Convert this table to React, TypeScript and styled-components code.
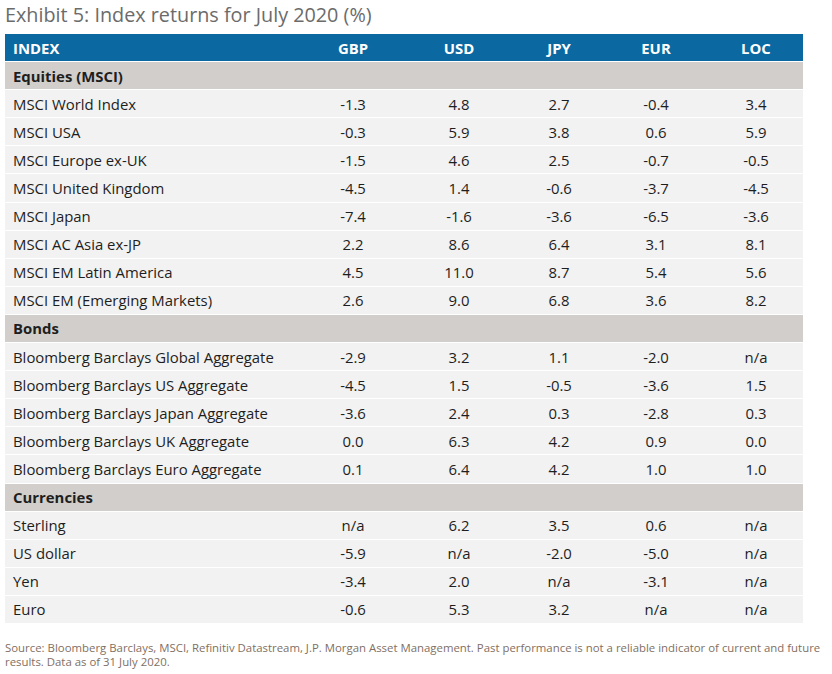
import { createGlobalStyle } from 'styled-components'
import styled from 'styled-components'

const GlobalStyle = createGlobalStyle`
  html, body {
    margin: 0;
    padding: 0;
    background: #ffffff;
  }
  body {
    font-family: "Open Sans", "Liberation Sans", sans-serif;
  }
`;

const Page = styled.div`
  width: 832px;
  height: 674px;
  padding: 0 0 0 5px;
  box-sizing: border-box;
  overflow: hidden;
`;

const Title = styled.h1`
  margin: 0;
  height: 34px;
  font-size: 19.8px;
  font-weight: 400;
  line-height: 30px;
  color: #6b6b6b;
`;

const Table = styled.div`
  width: 798px;
  display: flex;
  flex-direction: column;
  gap: 1px;
  background: #ffffff;
`;

const Row = styled.div<{ $kind: 'head' | 'section' | 'data' }>`
  display: grid;
  grid-template-columns: 298px 100px 112px 88px 106px 94px;
  height: 27.1px;
  align-items: center;
  font-size: 14.9px;
  background: ${p =>
    p.$kind === 'head' ? '#0b68a1' : p.$kind === 'section' ? '#d1cecb' : '#f2f2f2'};
  color: ${p => (p.$kind === 'head' ? '#ffffff' : '#1e1e1e')};
  font-weight: ${p => (p.$kind === 'data' ? 400 : 700)};
`;

const Label = styled.div`
  padding-left: 8px;
  white-space: nowrap;
`;

const Cell = styled.div`
  text-align: center;
`;

const Note = styled.p`
  margin: 18px 0 0;
  font-size: 11.4px;
  line-height: 14px;
  color: #7f6f63;
  white-space: nowrap;
`;

type Section = { name: string; rows: [string, string[]][] }

const sections: Section[] = [
  {
    name: 'Equities (MSCI)',
    rows: [
      ['MSCI World Index', ['-1.3', '4.8', '2.7', '-0.4', '3.4']],
      ['MSCI USA', ['-0.3', '5.9', '3.8', '0.6', '5.9']],
      ['MSCI Europe ex-UK', ['-1.5', '4.6', '2.5', '-0.7', '-0.5']],
      ['MSCI United Kingdom', ['-4.5', '1.4', '-0.6', '-3.7', '-4.5']],
      ['MSCI Japan', ['-7.4', '-1.6', '-3.6', '-6.5', '-3.6']],
      ['MSCI AC Asia ex-JP', ['2.2', '8.6', '6.4', '3.1', '8.1']],
      ['MSCI EM Latin America', ['4.5', '11.0', '8.7', '5.4', '5.6']],
      ['MSCI EM (Emerging Markets)', ['2.6', '9.0', '6.8', '3.6', '8.2']],
    ],
  },
  {
    name: 'Bonds',
    rows: [
      ['Bloomberg Barclays Global Aggregate', ['-2.9', '3.2', '1.1', '-2.0', 'n/a']],
      ['Bloomberg Barclays US Aggregate', ['-4.5', '1.5', '-0.5', '-3.6', '1.5']],
      ['Bloomberg Barclays Japan Aggregate', ['-3.6', '2.4', '0.3', '-2.8', '0.3']],
      ['Bloomberg Barclays UK Aggregate', ['0.0', '6.3', '4.2', '0.9', '0.0']],
      ['Bloomberg Barclays Euro Aggregate', ['0.1', '6.4', '4.2', '1.0', '1.0']],
    ],
  },
  {
    name: 'Currencies',
    rows: [
      ['Sterling', ['n/a', '6.2', '3.5', '0.6', 'n/a']],
      ['US dollar', ['-5.9', 'n/a', '-2.0', '-5.0', 'n/a']],
      ['Yen', ['-3.4', '2.0', 'n/a', '-3.1', 'n/a']],
      ['Euro', ['-0.6', '5.3', '3.2', 'n/a', 'n/a']],
    ],
  },
]

const columns = ['GBP', 'USD', 'JPY', 'EUR', 'LOC']

export default function App() {
  return (
    <Page>
      <GlobalStyle />
      <Title>Exhibit 5: Index returns for July 2020 (%)</Title>
      <Table>
        <Row $kind="head">
          <Label>INDEX</Label>
          {columns.map(c => (
            <Cell key={c}>{c}</Cell>
          ))}
        </Row>
        {sections.map(s => (
          <>
            <Row $kind="section" key={s.name}>
              <Label>{s.name}</Label>
            </Row>
            {s.rows.map(([name, vals]) => (
              <Row $kind="data" key={s.name + name}>
                <Label>{name}</Label>
                {vals.map((v, i) => (
                  <Cell key={i}>{v}</Cell>
                ))}
              </Row>
            ))}
          </>
        ))}
      </Table>
      <Note>
        Source: Bloomberg Barclays, MSCI, Refinitiv Datastream, J.P. Morgan Asset Management. Past performance is not a reliable indicator of current and future
        <br />
        results. Data as of 31 July 2020.
      </Note>
    </Page>
  )
}
